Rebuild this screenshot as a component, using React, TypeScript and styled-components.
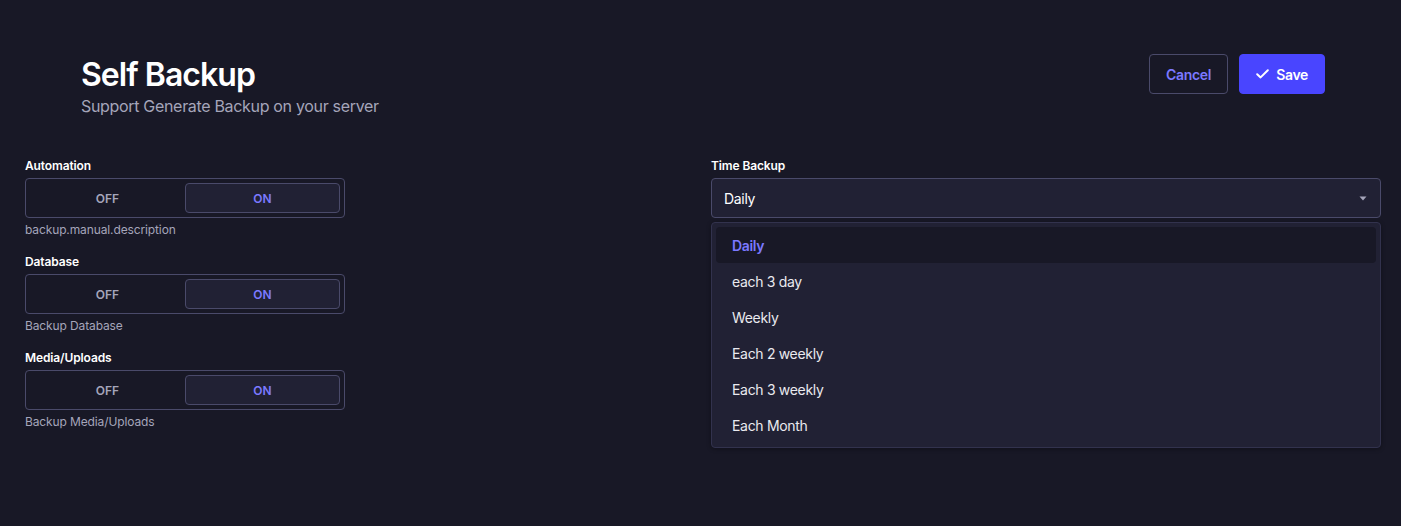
import React from "react";
import styled, { createGlobalStyle } from "styled-components";

const GlobalStyle = createGlobalStyle`
  html, body {
    margin: 0;
    padding: 0;
    background: #181826;
    font-family: Inter, "Noto Sans", sans-serif;
    -webkit-font-smoothing: antialiased;
  }
  * { box-sizing: border-box; }
`;

const Page = styled.div`
  min-height: 526px;
  background: #181826;
  color: #ffffff;
  letter-spacing: -0.02em;
`;

const Header = styled.header`
  padding: 55px 76px 0 81px;
  display: flex;
  flex-direction: column;
`;

const TitleRow = styled.div`
  display: flex;
  align-items: center;
  justify-content: space-between;
`;

const Title = styled.h1`
  margin: 0;
  font-size: 32px;
  line-height: 40px;
  font-weight: 600;
  letter-spacing: -0.03em;
  color: #ffffff;
`;

const Subtitle = styled.p`
  margin: -1px 0 0;
  font-size: 16px;
  line-height: 24px;
  color: #a5a5ba;
`;

const Actions = styled.div`
  display: flex;
  gap: 11px;
  margin-top: -2px;
`;

const Button = styled.button<{ $primary?: boolean }>`
  height: 40px;
  padding: 0 16px;
  border-radius: 4px;
  border: 1px solid ${(p) => (p.$primary ? "#4945ff" : "#4a4a6a")};
  background: ${(p) => (p.$primary ? "#4945ff" : "transparent")};
  color: ${(p) => (p.$primary ? "#ffffff" : "#7b79ff")};
  font-family: inherit;
  font-size: 14px;
  font-weight: 600;
  letter-spacing: inherit;
  display: flex;
  align-items: center;
  gap: 7px;
  cursor: pointer;
`;

const Content = styled.main`
  margin-top: 40px;
  padding: 0 20px 0 25px;
  display: grid;
  grid-template-columns: 1fr 1fr;
  column-gap: 16px;
  align-items: start;
`;

const Column = styled.div`
  display: flex;
  flex-direction: column;
  gap: 16px;
`;

const Field = styled.div`
  display: flex;
  flex-direction: column;
  gap: 4px;
  position: relative;
`;

const Label = styled.label`
  font-size: 12px;
  line-height: 16px;
  font-weight: 600;
  letter-spacing: -0.01em;
  color: #ffffff;
`;

const Hint = styled.span`
  font-size: 12px;
  line-height: 16px;
  letter-spacing: -0.01em;
  color: #a5a5ba;
`;

const Toggle = styled.div`
  width: 320px;
  height: 40px;
  border: 1px solid #4a4a6a;
  border-radius: 4px;
  padding: 4px;
  display: grid;
  grid-template-columns: 1fr 1fr;
`;

const ToggleOption = styled.span<{ $active?: boolean }>`
  display: flex;
  align-items: center;
  justify-content: center;
  border-radius: 4px;
  border: 1px solid ${(p) => (p.$active ? "#4a4a6a" : "transparent")};
  background: ${(p) => (p.$active ? "#212134" : "transparent")};
  color: ${(p) => (p.$active ? "#7b79ff" : "#a5a5ba")};
  font-size: 12px;
  font-weight: 600;
  letter-spacing: 0;
  text-transform: uppercase;
`;

const Select = styled.div`
  height: 40px;
  border: 1px solid #4a4a6a;
  border-radius: 4px;
  background: #212134;
  padding: 0 13px 0 12px;
  display: flex;
  align-items: center;
  justify-content: space-between;
  font-size: 14px;
  color: #ffffff;
`;

const Menu = styled.ul`
  position: absolute;
  top: 64px;
  left: 0;
  right: 0;
  margin: 0;
  list-style: none;
  padding: 4px;
  background: #212134;
  border: 1px solid #32324d;
  border-radius: 4px;
  box-shadow: 0 1px 4px rgba(3, 3, 5, 0.35);
`;

const MenuItem = styled.li<{ $selected?: boolean }>`
  height: 36px;
  padding: 0 16px;
  display: flex;
  align-items: center;
  border-radius: 4px;
  font-size: 14px;
  font-weight: ${(p) => (p.$selected ? 600 : 400)};
  color: ${(p) => (p.$selected ? "#7b79ff" : "#eaeaef")};
  background: ${(p) => (p.$selected ? "#181826" : "transparent")};
`;

const fields = [
  { label: "Automation", hint: "backup.manual.description" },
  { label: "Database", hint: "Backup Database" },
  { label: "Media/Uploads", hint: "Backup Media/Uploads" },
];

const options = ["Daily", "each 3 day", "Weekly", "Each 2 weekly", "Each 3 weekly", "Each Month"];

const CheckIcon = () => (
  <svg width="13" height="10" viewBox="0 0 13 10" fill="none">
    <path d="M1.2 5.2 L4.6 8.4 L11.8 1.3" stroke="#ffffff" strokeWidth="2" strokeLinecap="round" strokeLinejoin="round" />
  </svg>
);

const Caret = () => (
  <svg width="8" height="5" viewBox="0 0 8 5">
    <path d="M0.5 0.5 H7.5 L4 4.5 Z" fill="#a5a5ba" />
  </svg>
);

export default function App() {
  return (
    <Page>
      <GlobalStyle />
      <Header>
        <TitleRow>
          <Title>Self Backup</Title>
          <Actions>
            <Button>Cancel</Button>
            <Button $primary>
              <CheckIcon />
              Save
            </Button>
          </Actions>
        </TitleRow>
        <Subtitle>Support Generate Backup on your server</Subtitle>
      </Header>
      <Content>
        <Column>
          {fields.map((f) => (
            <Field key={f.label}>
              <Label>{f.label}</Label>
              <Toggle>
                <ToggleOption>Off</ToggleOption>
                <ToggleOption $active>On</ToggleOption>
              </Toggle>
              <Hint>{f.hint}</Hint>
            </Field>
          ))}
        </Column>
        <Column>
          <Field>
            <Label>Time Backup</Label>
            <Select>
              <span>Daily</span>
              <Caret />
            </Select>
            <Menu>
              {options.map((o, i) => (
                <MenuItem key={o} $selected={i === 0}>
                  {o}
                </MenuItem>
              ))}
            </Menu>
          </Field>
        </Column>
      </Content>
    </Page>
  );
}
